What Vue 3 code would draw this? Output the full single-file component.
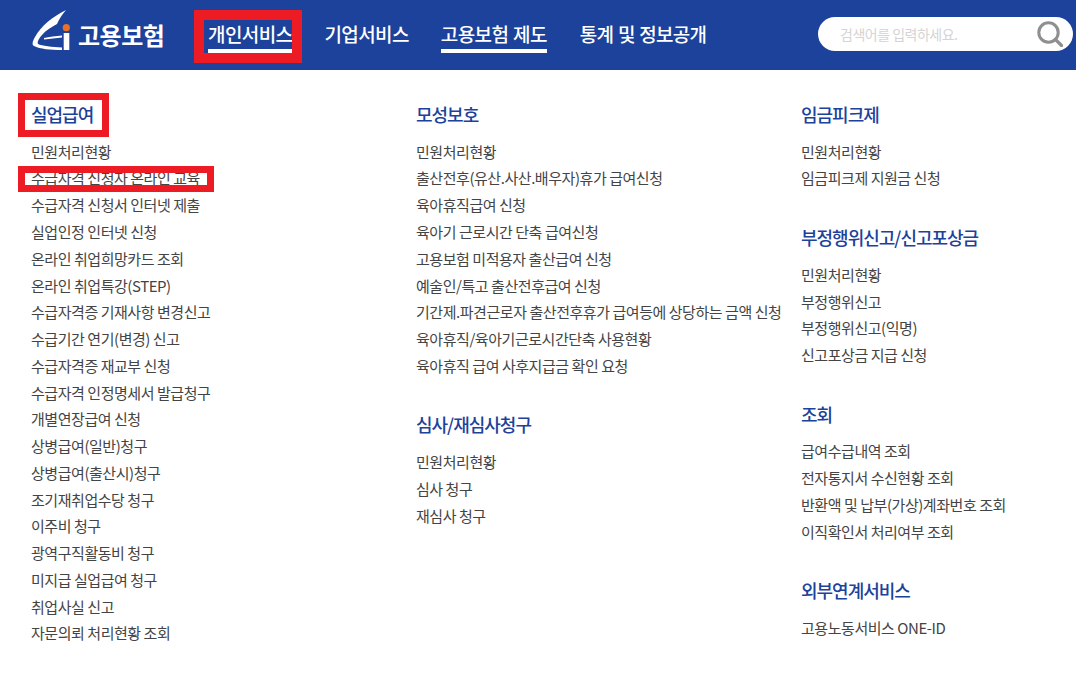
<script setup>
const nav = [
  { label: '개인서비스', active: true, annotated: true },
  { label: '기업서비스' },
  { label: '고용보험 제도', active: true },
  { label: '통계 및 정보공개' }
]
const columns = [
  [
    { title: '실업급여', annotated: true, items: ['민원처리현황', '수급자격 신청자 온라인 교육', '수급자격 신청서 인터넷 제출', '실업인정 인터넷 신청', '온라인 취업희망카드 조회', '온라인 취업특강(STEP)', '수급자격증 기재사항 변경신고', '수급기간 연기(변경) 신고', '수급자격증 재교부 신청', '수급자격 인정명세서 발급청구', '개별연장급여 신청', '상병급여(일반)청구', '상병급여(출산시)청구', '조기재취업수당 청구', '이주비 청구', '광역구직활동비 청구', '미지급 실업급여 청구', '취업사실 신고', '자문의뢰 처리현황 조회'] }
  ],
  [
    { title: '모성보호', items: ['민원처리현황', '출산전후(유산.사산.배우자)휴가 급여신청', '육아휴직급여 신청', '육아기 근로시간 단축 급여신청', '고용보험 미적용자 출산급여 신청', '예술인/특고 출산전후급여 신청', '기간제.파견근로자 출산전후휴가 급여등에 상당하는 금액 신청', '육아휴직/육아기근로시간단축 사용현황', '육아휴직 급여 사후지급금 확인 요청'] },
    { title: '심사/재심사청구', items: ['민원처리현황', '심사 청구', '재심사 청구'] }
  ],
  [
    { title: '임금피크제', items: ['민원처리현황', '임금피크제 지원금 신청'] },
    { title: '부정행위신고/신고포상금', items: ['민원처리현황', '부정행위신고', '부정행위신고(익명)', '신고포상금 지급 신청'] },
    { title: '조회', items: ['급여수급내역 조회', '전자통지서 수신현황 조회', '반환액 및 납부(가상)계좌번호 조회', '이직확인서 처리여부 조회'] },
    { title: '외부연계서비스', items: ['고용노동서비스 ONE-ID'] }
  ]
]
</script>

<template>
  <div class="page">
    <header class="header">
      <div class="logo">
        <svg class="logo-mark" width="38" height="42" viewBox="0 0 38 42">
          <path d="M34 1 C20 8 9 17 3 28 C0 33 0 36 2 37 C8 40 18 41 30 41 L30 38.5 C20 38 10 37 6 35 C5 33 7 29 10 26 C14 21 20 18 25 15 C27 10 30 6 34 1 Z" fill="#fff" />
          <path d="M12 29 C17 28 24 27 30 26.5 L30 28.5 C24 29 18 30 12 30.5 Z" fill="#fff" />
          <circle cx="34.3" cy="18.7" r="3.6" fill="#e8702a" />
          <rect x="31.7" y="24" width="5.6" height="17" fill="#fff" />
        </svg>
        <span class="logo-text">고용보험</span>
      </div>
      <nav class="nav">
        <a v-for="n in nav" :key="n.label" class="nav-item" :class="{ active: n.active, annotated: n.annotated }">{{ n.label }}</a>
      </nav>
      <div class="search">
        <span class="placeholder">검색어를 입력하세요.</span>
        <svg class="search-icon" width="26" height="26" viewBox="0 0 26 26">
          <circle cx="11.5" cy="11.5" r="9.7" fill="none" stroke="#8f8f8f" stroke-width="3" />
          <path d="M18.5 18.5 L24.5 24.5" stroke="#8f8f8f" stroke-width="3.2" stroke-linecap="round" />
        </svg>
      </div>
    </header>
    <main class="menu">
      <div v-for="(col, i) in columns" :key="i" class="column">
        <section v-for="g in col" :key="g.title" class="group">
          <h2 class="title" :class="{ annotated: g.annotated }"><span>{{ g.title }}</span></h2>
          <ul class="list">
            <li v-for="(item, k) in g.items" :key="item" class="item">
              {{ item }}
              <i v-if="g.annotated && k === 1" class="mark"></i>
            </li>
          </ul>
        </section>
      </div>
    </main>
  </div>
</template>

<style>
html, body { margin: 0; background: #fff; }
</style>

<style scoped>
.page {
  position: relative;
  width: 1076px;
  height: 677px;
  overflow: hidden;
  background: #fff;
  font-family: "Noto Sans CJK KR", "Noto Sans", sans-serif;
}
.header {
  height: 70px;
  background: #1c429b;
  display: flex;
  align-items: flex-start;
  padding-left: 32px;
  box-sizing: border-box;
  color: #fff;
}
.logo {
  display: flex;
  align-items: flex-start;
  gap: 8px;
  margin-top: 9px;
  width: 176px;
}
.logo-text {
  font-size: 24px;
  font-weight: 700;
  letter-spacing: -0.5px;
  line-height: 36px;
  margin-top: 8px;
}
.nav {
  display: flex;
  gap: 32px;
  margin-top: 20px;
}
.nav-item {
  position: relative;
  font-size: 19px;
  font-weight: 500;
  line-height: 28px;
  height: 33px;
  letter-spacing: -0.6px;
  word-spacing: 1px;
  white-space: nowrap;
}
.nav-item:last-child {
  margin-left: 1px;
  letter-spacing: -0.7px;
  word-spacing: 1px;
}
.nav-item.active::after {
  content: "";
  position: absolute;
  left: 0;
  right: 0;
  bottom: 0;
  height: 4px;
  background: #fff;
}
.nav-item.annotated::before {
  content: "";
  position: absolute;
  left: -14px;
  right: -10px;
  top: -10px;
  bottom: -10px;
  border: 10px solid #ed1c24;
}
.search {
  position: absolute;
  left: 818px;
  top: 17px;
  width: 255px;
  height: 34px;
  box-sizing: border-box;
  border-radius: 17px;
  background: #fff;
  display: flex;
  align-items: center;
  justify-content: space-between;
  padding: 0 10px 0 22px;
}
.placeholder {
  font-size: 14px;
  color: #d4d4d4;
  letter-spacing: -0.5px;
}
.menu {
  display: grid;
  grid-template-columns: 385px 385px 1fr;
  padding: 31px 0 0 31px;
}
.group { margin-bottom: 31.9px; }
.title {
  margin: 0 0 11.7px;
  font-size: 18px;
  font-weight: 500;
  line-height: 26px;
  letter-spacing: -1px;
  color: #1c429b;
}
.title span { position: relative; display: inline-block; }
.title.annotated span::after {
  content: "";
  position: absolute;
  left: -13px;
  right: -16px;
  top: -8px;
  bottom: -10px;
  border: 7px solid #ed1c24;
}
.list { list-style: none; margin: 0; padding: 0; }
.item {
  position: relative;
  font-size: 15px;
  line-height: 26.78px;
  height: 26.78px;
  color: #444;
  letter-spacing: -0.45px;
  white-space: nowrap;
}
.mark {
  position: absolute;
  left: -13px;
  width: 196px;
  top: 0.5px;
  height: 26px;
  box-sizing: border-box;
  border: 7px solid #ed1c24;
}
</style>
